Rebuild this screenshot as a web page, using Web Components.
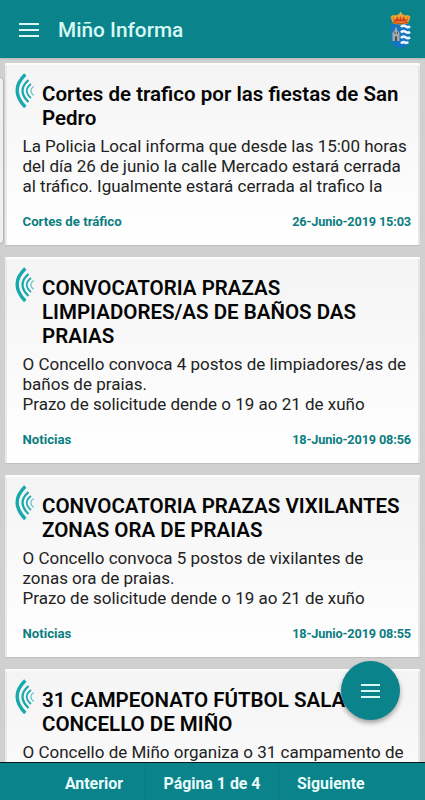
<!DOCTYPE html>
<html lang="es">
<head>
<meta charset="utf-8">
<meta name="viewport" content="width=device-width, initial-scale=1">
<title>Miño Informa</title>
<style>
  html, body {
    margin: 0;
    height: 100%;
    overflow: hidden;
  }

  body {
    font-family: Roboto, "Liberation Sans", sans-serif;
    --teal: #0a848a;
  }
</style>
</head>
<body>
<informa-app>
  <app-header slot="header">Miño Informa</app-header>

  <news-card category="Cortes de tráfico" date="26-Junio-2019 15:03">
    <span slot="title">Cortes de trafico por las fiestas de San<br>Pedro</span>
    La Policia Local informa que desde las 15:00 horas<br>del día 26 de junio la calle Mercado estará cerrada<br>al tráfico. Igualmente estará cerrada al trafico la
  </news-card>
  <news-card category="Noticias" date="18-Junio-2019 08:56">
    <span slot="title">CONVOCATORIA PRAZAS<br>LIMPIADORES/AS DE BAÑOS DAS<br>PRAIAS</span>
    O Concello convoca 4 postos de limpiadores/as de<br>baños de praias.<br>Prazo de solicitude dende o 19 ao 21 de xuño
  </news-card>
  <news-card category="Noticias" date="18-Junio-2019 08:55">
    <span slot="title">CONVOCATORIA PRAZAS VIXILANTES<br>ZONAS ORA DE PRAIAS</span>
    O Concello convoca 5 postos de vixilantes de<br>zonas ora de praias.<br>Prazo de solicitude dende o 19 ao 21 de xuño
  </news-card>
  <news-card>
    <span slot="title">31 CAMPEONATO FÚTBOL SALA<br>CONCELLO DE MIÑO</span>
    O Concello de Miño organiza o 31 campamento de
  </news-card>

  <fab-button slot="fab"></fab-button>
  <page-bar slot="footer" page="1" total="4"></page-bar>
</informa-app>

<script>
(function () {
  {
    const template = document.createElement('template')
    template.innerHTML = `
    <style>
      :host {
        display: flex;
        flex-direction: column;
        position: relative;
        height: 100%;
        background: #d0d0d1;
      }

      main {
        flex: 1;
        min-height: 0;
        overflow: hidden;
        position: relative;
        display: flex;
        flex-direction: column;
        gap: 12px;
        padding: 5px 5px 0;
        box-sizing: border-box;
        box-shadow: inset 0 2px 2px -1px #b4b8ba;
      }

      .peek {
        position: absolute;
        left: -11px;
        top: 19px;
        width: 15px;
        height: 167px;
        border-radius: 4px;
        background: #f0f0f0;
        border: 1px solid #b4b4b4;
        box-sizing: border-box;
      }

      ::slotted(fab-button) {
        position: absolute;
        right: 25px;
        bottom: 80px;
      }
    </style>

    <slot name="header"></slot>
    <main>
      <div class="peek"></div>
      <slot></slot>
    </main>
    <slot name="fab"></slot>
    <slot name="footer"></slot>
  `
    customElements.define('informa-app', class InformaApp extends HTMLElement {
      constructor() {
        super()
        this.attachShadow({ mode: 'open' })
        this.shadowRoot.appendChild(template.content.cloneNode(true))
      }
    })
  }

  {
    const template = document.createElement('template')
    template.innerHTML = `
    <style>
      :host {
        display: block;
        color: #d8f8f6;
      }

      svg {
        display: block;
        width: var(--menu-icon-width, 20px);
        height: 14px;
      }
    </style>

    <svg viewBox="0 0 20 14" preserveAspectRatio="none" fill="currentColor">
      <path d="M0 0h20v2H0zM0 6h20v2H0zM0 12h20v2H0z"/>
    </svg>
  `
    customElements.define('menu-icon', class MenuIcon extends HTMLElement {
      constructor() {
        super()
        this.attachShadow({ mode: 'open' })
        this.shadowRoot.appendChild(template.content.cloneNode(true))
      }
    })
  }

  {
    const template = document.createElement('template')
    template.innerHTML = `
    <style>
      :host {
        display: block;
        width: 21px;
        height: 36px;
      }

      svg {
        display: block;
      }
    </style>

    <svg width="21" height="36" viewBox="0 0 21 36">
      <path d="M1 12V27Q1 35 10.500 36Q20 35 20 27V12Z" fill="#1674c4"/>
      <path d="M11 12.500H20V28Q19 33 11 35.500Z" fill="#1474c2"/>
      <g fill="none" stroke="#eef6fb" stroke-width="2.600">
        <path d="M11 15Q13 12.500 15.500 14.300T20 14.300"/>
        <path d="M11 20.500Q13 18 15.500 19.800T20 19.800"/>
        <path d="M11 26Q13 23.500 15.500 25.300T20 25.300"/>
        <path d="M11 31.500Q13 29 15.500 30.800L18.500 30.500"/>
      </g>
      <path d="M2.500 29V21L3.500 19L4.500 21V18.500L6 14.500L7.500 18.500V21L8.500 19L9.500 21V29Z" fill="#a8a9a5"/>
      <path d="M5 29V25Q6 23 7 25V29ZM4.500 20H5.500V22H4.500ZM7 20H8V22H7Z" fill="#46505a"/>
      <path d="M3 11.500L.5 5Q2.500 2 6 3.500Q8 1.500 10.500 2Q13 1.500 15 3.500Q18.500 2 20.500 5L18 11.500Q10.500 13.500 3 11.500Z" fill="#e8a12c"/>
      <path d="M3 5L5 8.500L7.500 4.500L9 8.500L10.500 4L12 8.500L13.500 4.500L16 8.500L18 5L17 9.500H4Z" fill="#d63a20"/>
      <path d="M3 10.300Q10.500 12.300 18 10.300" stroke="#c94c1d" fill="none" stroke-width="1.200"/>
      <path d="M10.500 0V3.500M9.300 1.300H11.700" stroke="#e8b04a" stroke-width="1"/>
    </svg>
  `
    customElements.define('town-crest', class TownCrest extends HTMLElement {
      constructor() {
        super()
        this.attachShadow({ mode: 'open' })
        this.shadowRoot.appendChild(template.content.cloneNode(true))
      }
    })
  }

  {
    const template = document.createElement('template')
    template.innerHTML = `
    <style>
      :host {
        display: flex;
        align-items: center;
        flex: none;
        height: 58px;
        padding: 2px 14px 0 19px;
        box-sizing: border-box;
        background: var(--teal);
        color: #d8f8f6;
      }

      h1 {
        flex: 1;
        margin: 0 0 0 19px;
        font-size: 20.800px;
        font-weight: 500;
        line-height: 24px;
      }
    </style>

    <menu-icon></menu-icon>
    <h1><slot></slot></h1>
    <town-crest></town-crest>
  `
    customElements.define('app-header', class AppHeader extends HTMLElement {
      constructor() {
        super()
        this.attachShadow({ mode: 'open' })
        this.shadowRoot.appendChild(template.content.cloneNode(true))
      }
    })
  }

  {
    const template = document.createElement('template')
    template.innerHTML = `
    <style>
      :host {
        display: block;
        flex: none;
        box-sizing: border-box;
        padding: 19px 9px 16px 17px;
        background: linear-gradient(#f4f4f4, #fff);
        border-radius: 2px 2px 0 0;
        box-shadow: inset 0 2px #fdfdfd, inset 2px 0 #e9e9e9, inset -2px 0 #e6e6e6, 0 1px 1px #bdbdbd;
      }

      header {
        display: flex;
        align-items: flex-start;
        margin-left: -7.500px;
      }

      svg {
        flex: none;
        margin-top: -9.500px;
      }

      h2 {
        margin: 0 0 0 7.500px;
        font-size: 20.530px;
        font-weight: 600;
        line-height: 24px;
        white-space: nowrap;
        color: #050505;
      }

      p {
        margin: 7px 0 0 .5px;
        height: 60px;
        font-size: 17px;
        line-height: 19.800px;
        white-space: nowrap;
        color: #222;
      }

      footer {
        display: flex;
        justify-content: space-between;
        margin-top: 17px;
        height: 15px;
        line-height: 15px;
        font-size: 13.200px;
        font-weight: 700;
        color: #0b7d80;
      }

      .category {
        margin-left: .5px;
      }

      .date {
        font-size: 12.700px;
        letter-spacing: -.13px;
      }
    </style>

    <header>
      <svg width="20" height="36" viewBox="0 0 20 36" fill="none" stroke="#17a9ae">
        <path d="M10.300 1.500Q-6 17 10.300 34" stroke-width="3.400"/>
        <path d="M13.500 7Q1.500 17.500 13.500 29" stroke-width="2.300"/>
        <path d="M16 11Q7.500 17.500 16 25" stroke-width="1.700"/>
        <path d="M18.600 13.500Q13 17.500 18.600 22.500" stroke-width="1.300" stroke="#5fc4c7"/>
      </svg>
      <h2><slot name="title"></slot></h2>
    </header>
    <p><slot></slot></p>
    <footer>
      <span class="category"></span>
      <span class="date"></span>
    </footer>
  `
    customElements.define('news-card', class NewsCard extends HTMLElement {
      static get observedAttributes() {
        return ['category', 'date']
      }

      constructor() {
        super()
        this.attachShadow({ mode: 'open' })
        this.shadowRoot.appendChild(template.content.cloneNode(true))
      }

      attributeChangedCallback(name, oldValue, value) {
        this.shadowRoot.querySelector('.' + name).textContent = value
      }
    })
  }

  {
    const template = document.createElement('template')
    template.innerHTML = `
    <style>
      :host {
        display: flex;
        align-items: center;
        justify-content: center;
        width: 59px;
        height: 59px;
        border-radius: 50%;
        background: var(--teal);
        box-shadow: 0 3px 5px rgba(0, 0, 0, .35);
        --menu-icon-width: 19px;
      }
    </style>

    <menu-icon></menu-icon>
  `
    customElements.define('fab-button', class FabButton extends HTMLElement {
      constructor() {
        super()
        this.attachShadow({ mode: 'open' })
        this.shadowRoot.appendChild(template.content.cloneNode(true))
      }
    })
  }

  {
    const template = document.createElement('template')
    template.innerHTML = `
    <style>
      :host {
        display: flex;
        justify-content: center;
        flex: none;
        height: 38px;
        box-sizing: border-box;
        border-top: 1px solid #0a1a1c;
        background: var(--teal);
        color: #e9fbfb;
        font-size: 15.900px;
        font-weight: 700;
        line-height: 41px;
      }

      span {
        flex: none;
        box-sizing: border-box;
        white-space: nowrap;
      }

      .prev {
        width: 145px;
        padding-right: 22px;
        text-align: right;
      }

      .current {
        width: 134px;
        text-align: center;
        border: solid #087b81;
        border-width: 0 1px;
      }

      .next {
        width: 146px;
        padding-left: 18px;
      }
    </style>

    <span class="prev">Anterior</span>
    <span class="current"></span>
    <span class="next">Siguiente</span>
  `
    customElements.define('page-bar', class PageBar extends HTMLElement {
      constructor() {
        super()
        this.attachShadow({ mode: 'open' })
        this.shadowRoot.appendChild(template.content.cloneNode(true))
      }

      connectedCallback() {
        this.shadowRoot.querySelector('.current').textContent =
          `Página ${this.getAttribute('page')} de ${this.getAttribute('total')}`
      }
    })
  }
})()
</script>
</body>
</html>
